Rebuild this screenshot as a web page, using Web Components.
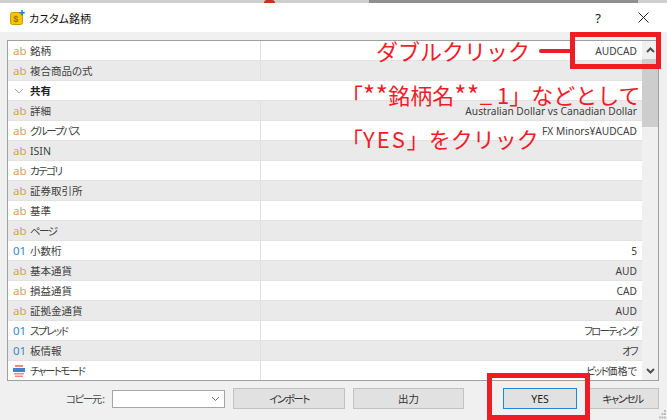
<!DOCTYPE html>
<html lang="ja"><head><meta charset="utf-8"><style>
html,body{margin:0;padding:0;width:667px;height:420px;overflow:hidden;background:#f0f0f0}
</style></head><body>
<symbol-dialog>
<prop-row slot="rows" icon="ab" name="銘柄" value="AUDCAD"></prop-row>
<prop-row slot="rows" icon="ab" name="複合商品の式" alt></prop-row>
<prop-row slot="rows" icon="chev" name="共有" group></prop-row>
<prop-row slot="rows" icon="ab" name="詳細" value="Australian Dollar vs Canadian Dollar" alt></prop-row>
<prop-row slot="rows" icon="ab" name="グループパス" value="FX Minors¥AUDCAD"></prop-row>
<prop-row slot="rows" icon="ab" name="ISIN" alt></prop-row>
<prop-row slot="rows" icon="ab" name="カテゴリ"></prop-row>
<prop-row slot="rows" icon="ab" name="証券取引所" alt></prop-row>
<prop-row slot="rows" icon="ab" name="基準"></prop-row>
<prop-row slot="rows" icon="ab" name="ページ" alt></prop-row>
<prop-row slot="rows" icon="01" name="小数桁" value="5"></prop-row>
<prop-row slot="rows" icon="ab" name="基本通貨" value="AUD" alt></prop-row>
<prop-row slot="rows" icon="ab" name="損益通貨" value="CAD"></prop-row>
<prop-row slot="rows" icon="ab" name="証拠金通貨" value="AUD" alt></prop-row>
<prop-row slot="rows" icon="01" name="スプレッド" value="フローティング"></prop-row>
<prop-row slot="rows" icon="01" name="板情報" value="オフ" alt></prop-row>
<prop-row slot="rows" icon="enum" name="チャートモード" value="ビッド価格で"></prop-row>
</symbol-dialog>
<script>
const FONT='"Noto Sans","Noto Sans CJK JP",sans-serif';
const kata=s=>s.replace(/[ァ-ヶー]+/g,m=>`<span style="letter-spacing:-1.500px">${m}</span>`);
class PropRow extends HTMLElement{
  connectedCallback(){
    const r=this.attachShadow({mode:'open'});
    const g=this.hasAttribute('group'),ic=this.getAttribute('icon');
    let icon;
    if(ic==='ab')icon='<span class="i ab">ab</span>';
    else if(ic==='01')icon='<span class="i n">01</span>';
    else if(ic==='chev')icon='<svg width="10" height="6" viewBox="0 0 10 6" style="margin-left:1px"><path d="M1 1l4 4 4-4" fill="none" stroke="#a8a8a8" stroke-width="1"/></svg>';
    else icon='<svg width="12" height="12" viewBox="0 0 12 12"><path d="M2 0h8v2H2z" fill="#f08a80"/><path d="M0 3h12v4H0z" fill="#3f83c8"/><path d="M1 8h10v1.500H1zM2 10.500h8V12H2z" fill="#f08a80"/></svg>';
    r.innerHTML=`<style>
    :host{display:grid;grid-template-columns:253px 1fr;height:20px;box-sizing:border-box;border-bottom:1px solid #e2e2e2;background:${this.hasAttribute('alt')?'#eaeaea':'#fff'};font:10.200px ${FONT};font-feature-settings:"palt";color:#404040}
    .l{display:flex;align-items:center;${g?'':'border-right:1px solid #e0e0e0;'}min-width:0}
    .ic{width:22px;padding-left:5px;box-sizing:border-box;display:flex;align-items:center;flex:none}
    .i{font:11.500px ${FONT};line-height:1}
    .ab{color:#cfa35c}.n{color:#3a86c6}
    .nm{white-space:nowrap;font-size:10.500px;${g?'font-weight:700;color:#222;':''}}
    .v{display:flex;align-items:center;justify-content:flex-end;padding-right:5px;white-space:nowrap;overflow:hidden}
    </style><div class="l"><span class="ic">${icon}</span><span class="nm">${kata(this.getAttribute('name'))}</span></div><div class="v"><span>${kata(this.getAttribute('value')||'')}</span></div>`;
  }
}
customElements.define('prop-row',PropRow);
class DlgButton extends HTMLElement{
  connectedCallback(){
    const r=this.attachShadow({mode:'open'});
    r.innerHTML=`<style>:host{display:flex;align-items:center;justify-content:center;box-sizing:border-box;height:21px;background:#e1e1e1;border:1px solid #c2c2c2;font:10.500px ${FONT};font-feature-settings:"palt";color:#333}
    :host([primary]){border:1px solid #1f86d8;color:#222}
    ::slotted(*){letter-spacing:-1.500px}</style><slot></slot>`;
  }
}
customElements.define('dlg-button',DlgButton);
class ScrollBar extends HTMLElement{
  connectedCallback(){
    const r=this.attachShadow({mode:'open'});
    r.innerHTML=`<style>:host{display:flex;flex-direction:column;width:16px;background:#f0f0f0;flex:none}
    .a{height:18px;display:flex;align-items:center;justify-content:center;flex:none}
    .t{height:68px;background:#cdcdcd;flex:none}.s{flex:1}</style>
    <div class="a"><svg width="9" height="6" viewBox="0 0 9 6"><path d="M1 5l3.500-3.500L8 5" fill="none" stroke="#505050" stroke-width="2"/></svg></div>
    <div class="t"></div><div class="s"></div>
    <div class="a"><svg width="9" height="6" viewBox="0 0 9 6"><path d="M1 1l3.500 3.500L8 1" fill="none" stroke="#505050" stroke-width="2"/></svg></div>`;
  }
}
customElements.define('scroll-bar',ScrollBar);
class SymbolDialog extends HTMLElement{
  connectedCallback(){
    const r=this.attachShadow({mode:'open'});
    r.innerHTML=`<style>
    :host{display:flex;flex-direction:column;position:relative;width:667px;height:420px;background:#f0f0f0;font:10.500px ${FONT};font-feature-settings:"palt";overflow:hidden}
    .strip{height:3px;display:flex;flex:none;background:#cfcfcf}
    .strip i{display:block;height:3px}
    .title{height:29px;background:#fff;display:flex;align-items:center;flex:none;padding-left:10px;color:#111}
    .title .t{font-size:11px;margin-left:4px}
    .title .q{margin-left:auto;width:30px;text-align:center;font-size:13px;margin-right:7px}
    .title .x{width:46px;display:flex;justify-content:center;margin-right:1px}
    .list{margin:8px 8px 0 7px;height:341px;box-sizing:border-box;border:1px solid #a0a0a0;display:flex;flex:none;background:#fff}
    .rows{flex:1;min-width:0;overflow:hidden}
    .foot{display:flex;align-items:center;height:21px;margin-top:7px;color:#4a4a4a}
    .lab{width:105px;text-align:right;margin-right:7px}
    .combo{width:113px;height:18px;box-sizing:border-box;background:#fff;border:1px solid #a6a6a6;display:flex;align-items:center;justify-content:flex-end;padding-right:4px;margin-right:8px}
    .btn-k{letter-spacing:-1.500px}
    .over{position:absolute;color:#f01c2a;font:400 22px/1 "Noto Sans CJK JP",sans-serif;font-feature-settings:normal;white-space:nowrap}
    .over b{font-weight:400;letter-spacing:3px}
    .over b.st{font-size:26px;line-height:0;letter-spacing:.5px;vertical-align:-1px}
    .over b.us{letter-spacing:5px;display:inline-block;transform:translateY(-2px)}
    .box{position:absolute;box-sizing:border-box;border:5px solid #ee1c25}
    .ln{position:absolute;background:#ee1c25;border-radius:2px}
    .grip{position:absolute;right:1px;bottom:1px}
    </style>
    <div class="strip"><i style="width:264px"></i><i style="width:11px;background:#c8321e;border-radius:5px 5px 0 0"></i><i style="width:94px"></i><i style="width:269px;background:#8f8f8f"></i></div>
    <div class="title">
      <svg width="15" height="15" viewBox="0 0 15 15"><rect x=".5" y="2.500" width="12" height="12" rx="2" fill="#f6c400" stroke="#c99a00"/><text x="3.300" y="12" font-size="9" font-weight="700" fill="#9a7400" font-family="Liberation Sans">$</text><path d="M12 0v5.500M9.300 2.700h5.500" stroke="#1f7fd0" stroke-width="1.500"/></svg>
      <span class="t">カスタム銘柄</span>
      <span class="q">?</span>
      <span class="x"><svg width="11" height="11" viewBox="0 0 11 11"><path d="M.5.500l10 10M10.500.500l-10 10" stroke="#222" stroke-width="1"/></svg></span>
    </div>
    <div class="list"><div class="rows"><slot name="rows"></slot></div><scroll-bar></scroll-bar></div>
    <div class="foot">
      <span class="lab"><span class="btn-k">コピー</span>元:</span>
      <span class="combo"><svg width="9" height="6" viewBox="0 0 9 6"><path d="M1 1l3.500 3.500L8 1" fill="none" stroke="#666"/></svg></span>
      <dlg-button style="width:112px;margin-right:8px"><span>インポート</span></dlg-button>
      <dlg-button style="width:111px;margin-right:39px">出力</dlg-button>
      <dlg-button primary style="width:74px;margin-right:9px">YES</dlg-button>
      <dlg-button style="width:73px"><span>キャンセル</span></dlg-button>
    </div>
    <svg class="grip" width="7" height="9" viewBox="0 0 7 9" fill="#bdbdbd"><path d="M5 0h2v2H5zM2.500 3h2v2h-2zM5 3h2v2H5zM0 6.500h2v2H0zM2.500 6.500h2v2h-2zM5 6.500h2v2H5z"/></svg>
    <span class="over" style="left:376px;top:39px">ダブルクリック</span>
    <span class="over" style="left:341px;top:83px">「<b class="st">**</b>銘柄名<b class="st">**</b><b class="us">_</b>1」などとして</span>
    <span class="over" style="left:341px;top:127px">「<b style="letter-spacing:2px">YES</b>」をクリック</span>
    <div class="ln" style="left:539px;top:49px;width:34px;height:4px"></div>
    <div class="box" style="left:570px;top:32px;width:91px;height:37px"></div>
    <div class="box" style="left:487px;top:373px;width:103px;height:47px"></div>`;
  }
}
customElements.define('symbol-dialog',SymbolDialog);
</script></body></html>
